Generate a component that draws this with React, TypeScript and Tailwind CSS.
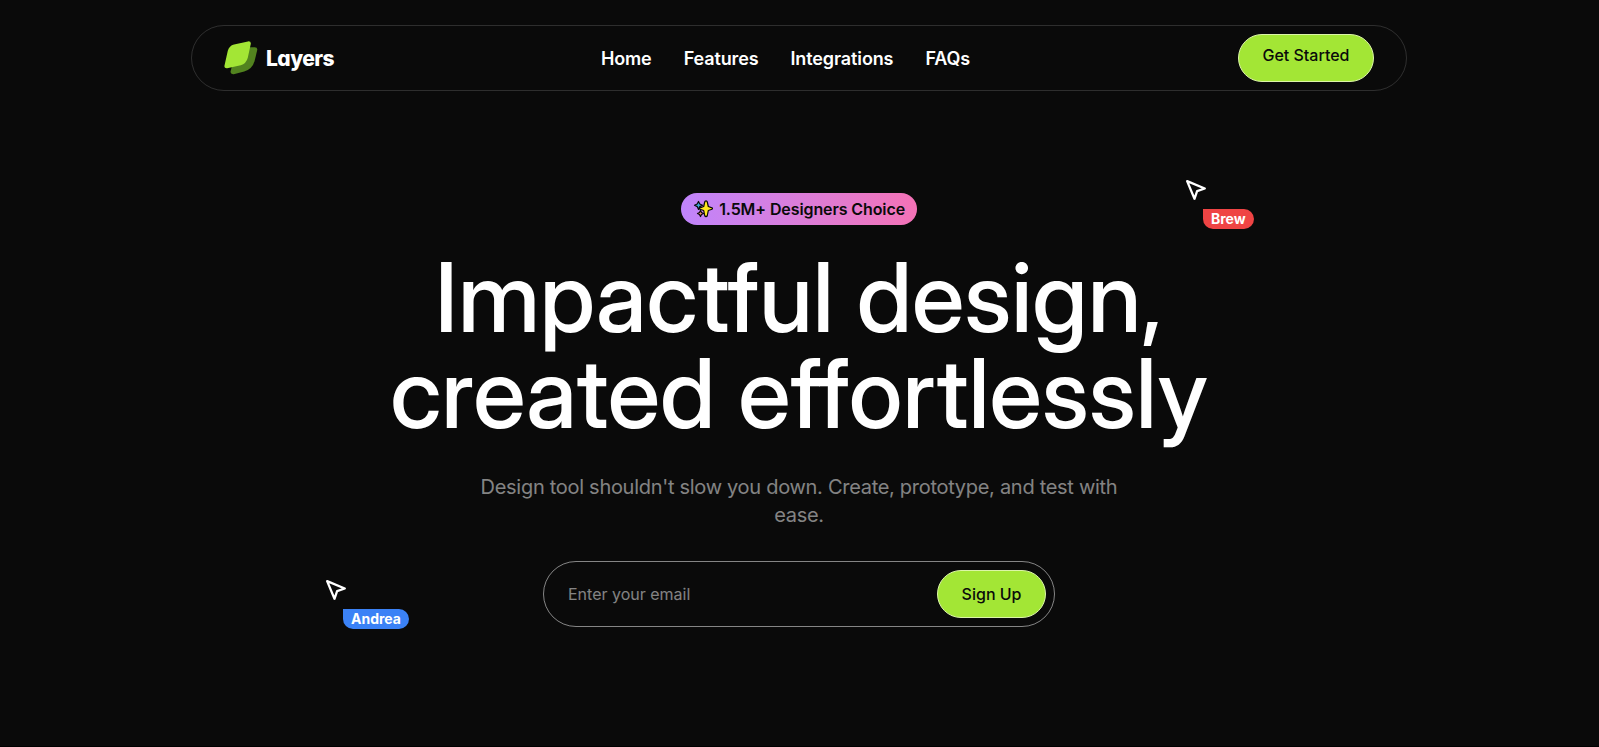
import React from "react";

const links = ["Home", "Features", "Integrations", "FAQs"];

function Logo() {
  return (
    <svg width="34" height="34" viewBox="-.2 -.3 34 34" fill="none" className="shrink-0">
      <path d="M25 6H30.500Q33.600 6 33 9L30.300 20Q28 28 20 30.200L9.500 32.900Q5.800 33.200 6.400 30L8 24Z" fill="#52831f" />
      <path d="M9.800 3.200L23.800 .1Q27.200 -.2 26.500 3L23.600 16.500Q22 22.500 16.500 23.900L3 26.900Q-.3 27.200 .3 24.300L3.600 9.500Q5 4.400 9.800 3.200Z" fill="#a3e635" />
    </svg>
  );
}

function Sparkles() {
  return (
    <svg width="20" height="20" viewBox="0 0 20 20" className="shrink-0" stroke="#0a0a0a" strokeWidth="1.200" strokeLinejoin="round">
      <path d="M5.500 2.500L6.800 5L9.500 6.300L6.800 7.600L5.500 10.500L4.200 7.600L1.500 6.300L4.200 5Z" fill="#3aa9d8" />
      <path d="M7.500 11.500L8.500 13.500L10.500 14.500L8.500 15.500L7.500 17.500L6.500 15.500L4.500 14.500L6.500 13.500Z" fill="#f28b6c" />
      <path d="M13 1.800Q14 1.800 14.300 3L15.300 7.500L19 8.900Q20.200 9.500 19 10.200L15.300 11.500L14.300 16.500Q14 17.700 13 17.700T11.700 16.500L10.700 11.500L7 10.200Q5.800 9.500 7 8.900L10.700 7.500L11.700 3Q12 1.800 13 1.800Z" fill="#ffe81f" />
    </svg>
  );
}

function Pointer({ name, color }: { name: string; color: string }) {
  return (
    <div>
      <svg width="25" height="25" viewBox="0 0 24 24" fill="none" stroke="white" strokeWidth="2.200" strokeLinecap="round" strokeLinejoin="round" className="ml-px">
        <path d="m3 3 7.070 16.970 2.510-7.390 7.390-2.510L3 3z" />
      </svg>
      <div className={`ml-5 mt-1.5 flex h-5 items-center rounded-[10px] rounded-tl-none px-2 text-sm font-bold text-white ${color}`}>
        {name}
      </div>
    </div>
  );
}

export default function App() {
  return (
    <div className="h-[747px] bg-black">
      <div className="relative h-[746px] overflow-hidden bg-neutral-950 pr-px pt-[25px] font-['Inter',sans-serif] text-white">
        <nav className="mx-auto flex h-[66px] w-[1216px] items-center justify-between rounded-full border border-white/15 px-8">
          <a className="flex w-[109px] items-center gap-2" href="#">
            <Logo />
            <span className="text-[21px] font-extrabold leading-none tracking-[-0.55px] [font-feature-settings:'cv11']">Layers</span>
          </a>
          <div className="flex justify-center gap-8 whitespace-nowrap pt-0.5 text-lg font-semibold tracking-[-0.12px]">
            {links.map((l) => (
              <a key={l} href="#">{l}</a>
            ))}
          </div>
          <button className="flex h-12 rounded-full border border-[#dcf5a8] bg-[#a3e635] px-[23.5px] pt-2 font-medium text-neutral-950">
            Get Started
          </button>
        </nav>
        <main className="flex flex-col items-center pt-[102px] text-center">
          <div className="flex h-8 w-[236px] items-center justify-between rounded-full bg-linear-to-r from-[#c084fc] to-[#f472b6] px-3 font-semibold tracking-[-0.1px] text-neutral-950">
            <Sparkles />
            1.5M+ Designers Choice
          </div>
          <h1 className="mt-6 font-['Inter_Display','Inter',sans-serif] text-[96px] font-medium leading-none">
            Impactful design,
            <br />
            created effortlessly
          </h1>
          <p className="mt-8 max-w-2xl text-xl leading-7 tracking-[-0.29px] text-white/50">
            Design tool shouldn't slow you down. Create, prototype, and test with
            <br />
            ease.
          </p>
          <form className="mt-8 flex h-[66px] w-lg items-center justify-between rounded-full border border-white/50 p-2">
            <input type="email" placeholder="Enter your email" className="min-w-0 flex-1 bg-transparent px-4 outline-none placeholder:text-white/50" />
            <button type="button" className="h-12 whitespace-nowrap rounded-full border border-[#dcf5a8] bg-[#a3e635] px-[23.5px] font-medium text-neutral-950">
              Sign Up
            </button>
          </form>
        </main>
        <div className="absolute left-[1183px] top-[178px]">
          <Pointer name="Brew" color="bg-[#ef4444]" />
        </div>
        <div className="absolute left-[323px] top-[578px]">
          <Pointer name="Andrea" color="bg-[#3b82f6]" />
        </div>
      </div>
    </div>
  );
}
